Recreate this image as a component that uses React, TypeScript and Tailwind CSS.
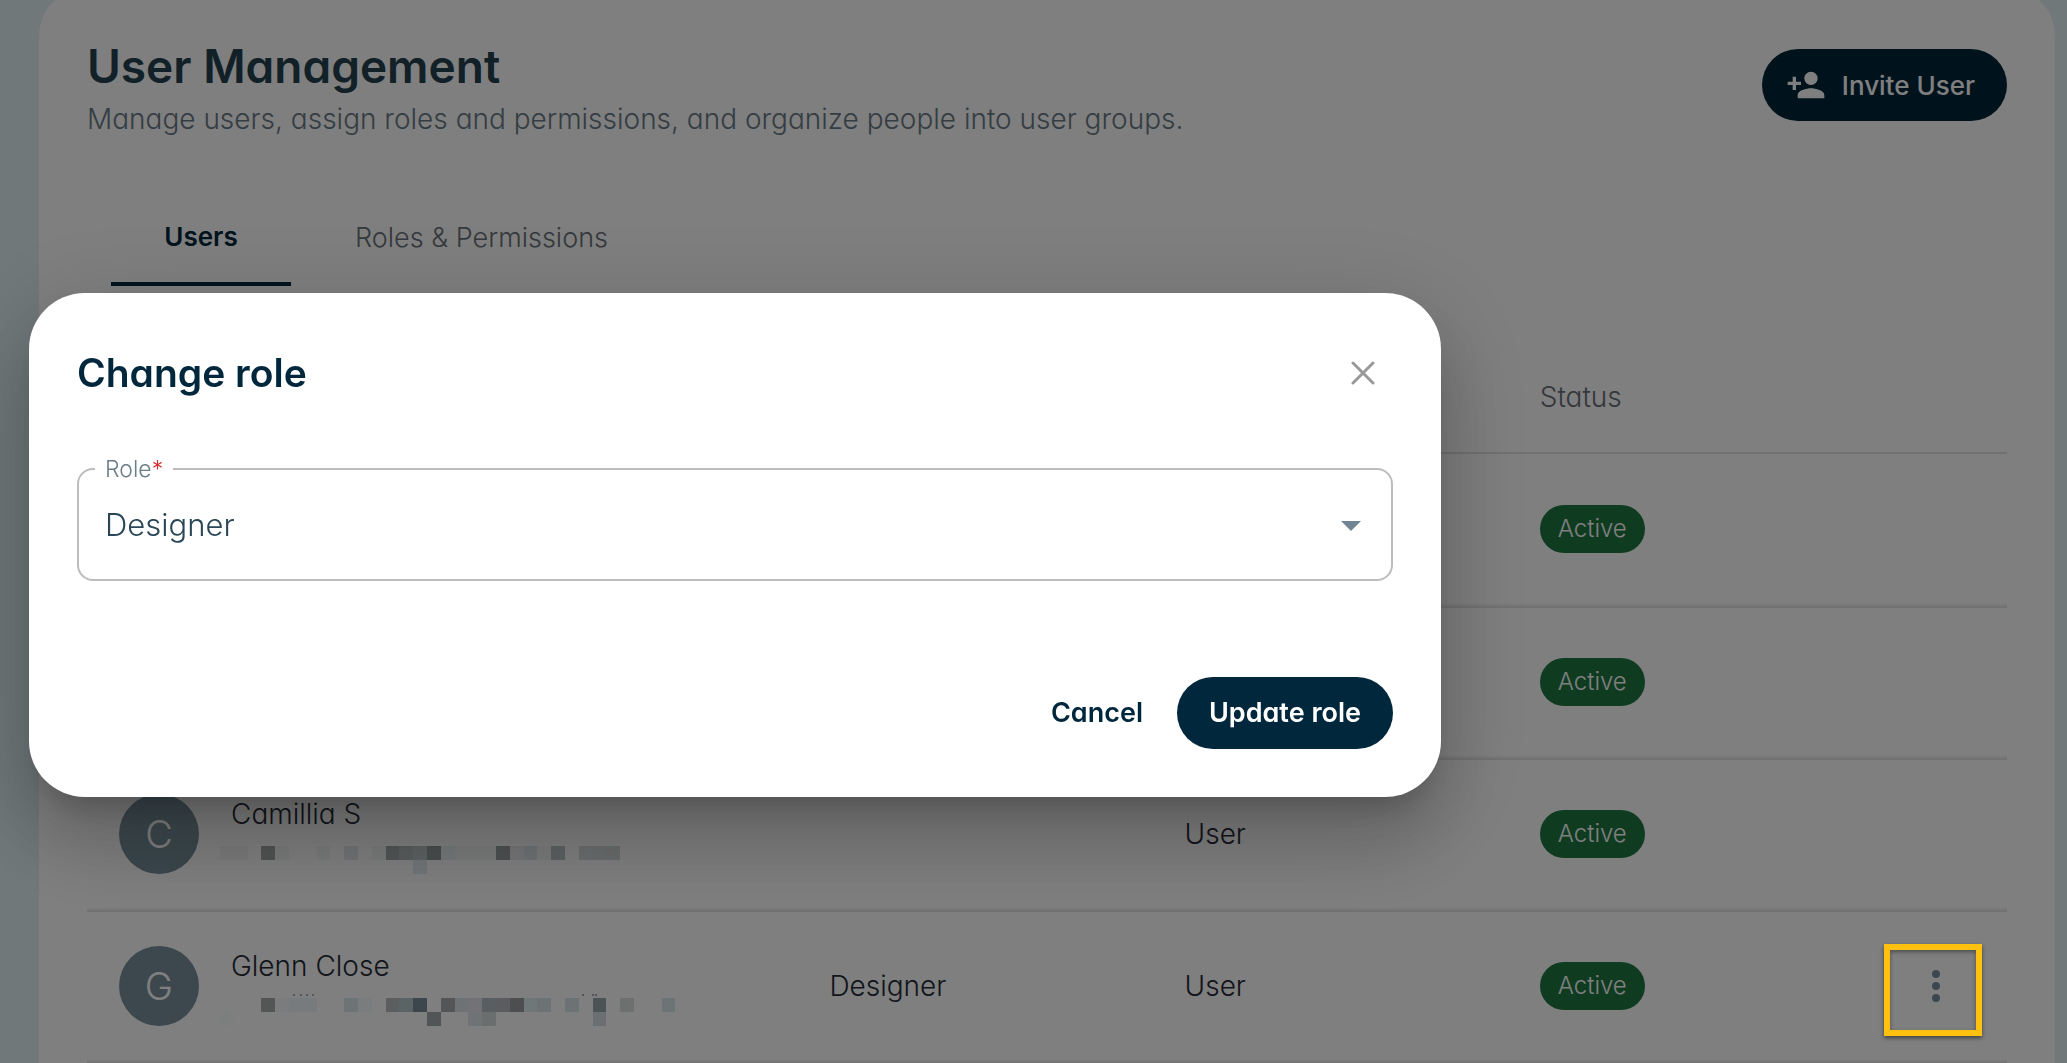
import { MdPersonAdd } from "react-icons/md";

type Block = [column: number, row: number, color: string];

const camilliaBlocks: Block[] = [
  [0, 0, "#f6f6f6"], [1, 0, "#f6f6f6"], [3, 0, "#a4a6a6"], [4, 0, "#f4f8f9"], [7, 0, "#f4f8f9"], [9, 0, "#e6e8ee"],
  [11, 0, "#f4f8f9"], [12, 0, "#a4acac"], [13, 0, "#b4bcbc"], [14, 0, "#bcc4c4"], [15, 0, "#949c9f"],
  [16, 0, "#eef4f5"], [17, 0, "#f4f8f8"], [18, 0, "#f4f8f9"], [19, 0, "#f4f8f9"], [20, 0, "#9ca2a4"],
  [21, 0, "#eeeef4"], [22, 0, "#e0e6ea"], [23, 0, "#f4f8f9"], [24, 0, "#bcc4c4"], [26, 0, "#d8dede"],
  [27, 0, "#d6dcdc"], [28, 0, "#d4dada"], [14, 1, "#e4ecf0"],
];

const glennBlocks: Block[] = [
  [3, 0, "#a8aaaa"], [4, 0, "#f4f8fa"], [5, 0, "#f0f6fa"], [6, 0, "#f0f6fa"], [9, 0, "#dce6ea"], [10, 0, "#f4fafc"],
  [12, 0, "#b8babe"], [13, 0, "#b4c6cc"], [14, 0, "#7a8c98"], [16, 0, "#a6aaac"], [17, 0, "#dee4e8"],
  [18, 0, "#e6e6ee"], [19, 0, "#b0bcc2"], [20, 0, "#b4b8be"], [21, 0, "#989c9e"], [22, 0, "#e0eef2"],
  [23, 0, "#dae4e8"], [25, 0, "#dae6ea"], [27, 0, "#96a6aa"], [29, 0, "#dce0e0"], [32, 0, "#dae8ea"],
  [0, 1, "#fafcfc"], [15, 1, "#a2aaac"], [18, 1, "#e0e6ea"], [19, 1, "#d4dcde"], [27, 1, "#d6dee2"],
];

const glennTicks = [73, 80, 86, 92, 362, 372, 375];

type User = {
  name?: string;
  role?: string;
  type?: string;
  blocks?: Block[];
  ticks?: number[];
  menu?: boolean;
};

const users: User[] = [
  {},
  {},
  { name: "Camillia S", type: "User", blocks: camilliaBlocks },
  { name: "Glenn Close", role: "Designer", type: "User", blocks: glennBlocks, ticks: glennTicks, menu: true },
];

function MaskedEmail({ blocks, ticks = [] }: { blocks: Block[]; ticks?: number[] }) {
  return (
    <svg className="-ml-[11px] mt-2 block h-8 w-[456px]" viewBox="0 0 456 32" shapeRendering="crispEdges" aria-hidden="true">
      {ticks.map((x) => (
        <rect key={x} x={x} y="0" width="2" height="2" fill="#a8acb0" />
      ))}
      {blocks.map(([column, row, color]) => (
        <rect key={`${column}-${row}`} x={column * 13.8} y={4 + row * 14} width="13.8" height="14" fill={color} />
      ))}
    </svg>
  );
}

function UserRow({ user }: { user: User }) {
  const cell = "border-b-2 border-[#dfe2e6] pb-0.5 pl-8 shadow-[inset_0_-2px_0_#f3f3f3]";
  return (
    <tr className="h-[152px] first:h-[154px]">
      <td className={cell}>
        {user.name && (
          <div className="flex items-center gap-8">
            <span className="flex size-20 items-center justify-center rounded-full bg-[#78909c] text-[38px] font-light text-white">
              {user.name[0]}
            </span>
            <div>
              <div className="leading-10">{user.name}</div>
              <MaskedEmail blocks={user.blocks ?? []} ticks={user.ticks} />
            </div>
          </div>
        )}
      </td>
      <td className={cell}>{user.role}</td>
      <td className={cell}>{user.type}</td>
      <td className={cell}>
        <span className="inline-flex h-12 items-center rounded-full bg-[#1e7742] px-[18px] align-middle text-2xl font-light text-white">
          Active
        </span>
      </td>
      <td className={cell}>
        {user.menu && (
          <div className="relative ml-auto mr-[47px] size-12">
            <button type="button" aria-label="User actions" className="flex size-12 flex-col items-center justify-center gap-1">
              <span className="size-2 rounded-full bg-[#78909c]" />
              <span className="size-2 rounded-full bg-[#78909c]" />
              <span className="size-2 rounded-full bg-[#78909c]" />
            </button>
            <span className="pointer-events-none absolute -left-7 -top-[18px] z-30 h-[92px] w-[98px] border-6 border-[#ffc010] shadow-[0_2px_4px_rgba(0,0,0,0.5),inset_0_2px_4px_rgba(0,0,0,0.4)]" />
          </div>
        )}
      </td>
    </tr>
  );
}

function ChangeRoleDialog() {
  return (
    <div className="fixed inset-0 z-20 flex items-start bg-black/50 pl-[29px] pr-8 pt-[293px]">
      <div
        role="dialog"
        aria-modal="true"
        aria-labelledby="dialog-title"
        className="w-full max-w-[1412px] rounded-[56px] bg-white p-12 shadow-[0_22px_30px_-14px_rgba(0,0,0,0.2),0_48px_76px_6px_rgba(0,0,0,0.14),0_18px_92px_16px_rgba(0,0,0,0.12)]"
      >
        <div className="flex h-16 items-center justify-between">
          <h2 id="dialog-title" className="text-[39px] font-semibold text-[#00273b]">
            Change role
          </h2>
          <button type="button" aria-label="Close" className="mr-[10px] flex size-10 items-center justify-center">
            <svg viewBox="0 0 24 24" className="size-6" fill="none" stroke="#999" strokeWidth="3" strokeLinecap="round">
              <path d="M2 2 22 22M22 2 2 22" />
            </svg>
          </button>
        </div>
        <fieldset className="mt-[52px] h-[124px] rounded-2xl border-2 border-[#bdbdbd]">
          <legend className="ml-4 h-6 px-2.5 text-[23px] font-light leading-6 text-[#6b7d88]">
            <label htmlFor="role">
              Role<span className="text-[#d32f2f]">*</span>
            </label>
          </legend>
          <div className="relative">
            <select
              id="role"
              className="h-[88px] w-full appearance-none bg-transparent px-[26px] text-[31px] font-light text-[#2b4757]"
            >
              <option>Designer</option>
            </select>
            <svg viewBox="0 0 20 10" className="pointer-events-none absolute right-[30px] top-10 h-2.5 w-5" fill="#708594" aria-hidden="true">
              <path d="M0 0H20L10 10Z" />
            </svg>
          </div>
        </fieldset>
        <div className="mt-24 flex items-center justify-end gap-[34px] text-[27px] font-semibold">
          <button type="button" className="text-[#00273b]">
            Cancel
          </button>
          <button type="button" className="h-[72px] rounded-full bg-[#00273b] px-8 text-white">
            Update role
          </button>
        </div>
      </div>
    </div>
  );
}

export default function App() {
  return (
    <div className="flex h-screen flex-col overflow-hidden bg-[#e0f0f3] pl-[39px] pr-3 font-['Inter',sans-serif] [font-feature-settings:'cv11']">
      <main className="-mt-3 grow rounded-t-[48px] bg-white px-12 pt-12">
        <header className="flex items-start justify-between">
          <div>
            <h1 className="text-[46px] font-semibold leading-[60px] text-[#24404f]">User Management</h1>
            <p className="text-[28px] font-light leading-[46px] text-[#6a7a85]">
              Manage users, assign roles and permissions, and organize people into user groups.
            </p>
          </div>
          <button
            type="button"
            className="mt-[13px] flex h-[72px] items-center gap-4 rounded-full bg-[#00273b] pl-6 pr-8 text-[26px] font-medium text-white"
          >
            <MdPersonAdd className="size-10" />
            Invite User
          </button>
        </header>
        <nav className="mt-12 flex h-24 pl-6">
          <button type="button" className="w-[180px] border-b-4 border-[#00273b] text-[26px] font-semibold text-[#00273b]">
            Users
          </button>
          <button type="button" className="ml-16 text-[27px] font-light text-[#6a7279]">
            Roles &amp; Permissions
          </button>
        </nav>
        <table className="mt-14 w-full table-fixed border-separate border-spacing-0 text-[28px] font-light text-[#262b36]">
          <thead>
            <tr className="h-28 text-left text-[#696e78]">
              <th className="w-[37%] border-b-2 border-[#e2e2e4]" />
              <th className="w-[18.5%] border-b-2 border-[#e2e2e4]" />
              <th className="w-[18.5%] border-b-2 border-[#e2e2e4]" />
              <th className="border-b-2 border-[#e2e2e4] pl-8 font-light">Status</th>
              <th className="border-b-2 border-[#e2e2e4]" />
            </tr>
          </thead>
          <tbody>
            {users.map((user, index) => (
              <UserRow key={index} user={user} />
            ))}
          </tbody>
        </table>
      </main>
      <ChangeRoleDialog />
    </div>
  );
}
